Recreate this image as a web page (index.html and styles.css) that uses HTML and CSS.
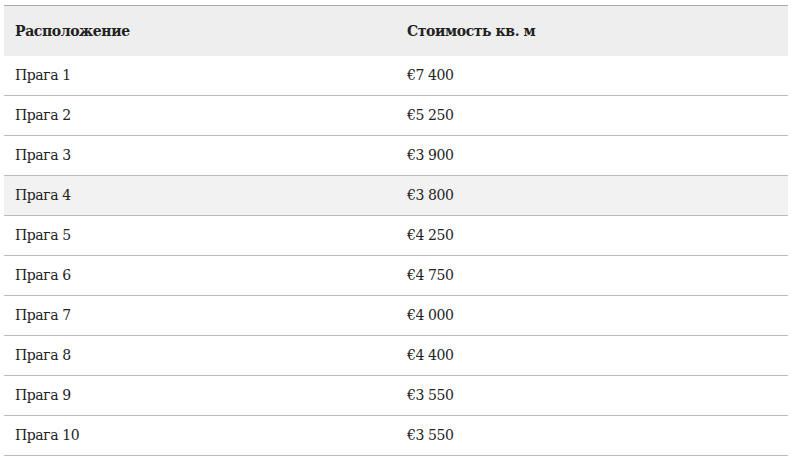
FILE: index.html
```html
<!DOCTYPE html>
<html lang="ru">
<head>
<meta charset="utf-8">
<link rel="stylesheet" href="styles.css">
</head>
<body>
<table class="prices">
  <thead>
    <tr><th>Расположение</th><th>Стоимость кв. м</th></tr>
  </thead>
  <tbody>
    <tr><td>Прага 1</td><td>€7 400</td></tr>
    <tr><td>Прага 2</td><td>€5 250</td></tr>
    <tr><td>Прага 3</td><td>€3 900</td></tr>
    <tr class="hl"><td>Прага 4</td><td>€3 800</td></tr>
    <tr><td>Прага 5</td><td>€4 250</td></tr>
    <tr><td>Прага 6</td><td>€4 750</td></tr>
    <tr><td>Прага 7</td><td>€4 000</td></tr>
    <tr><td>Прага 8</td><td>€4 400</td></tr>
    <tr><td>Прага 9</td><td>€3 550</td></tr>
    <tr><td>Прага 10</td><td>€3 550</td></tr>
  </tbody>
</table>
</body>
</html>
```
FILE: styles.css
```css
html, body { margin: 0; padding: 0; background: #fff; }
body { padding: 5px 13px 0 4px; }
.prices {
  width: 784px;
  border-collapse: collapse;
  font-family: "DejaVu Serif", serif;
  font-size: 14px;
  letter-spacing: -0.4px;
  line-height: 18px;
  color: #222;
  border-top: 1px solid #aaa;
}
.prices th, .prices td {
  width: 50%;
  text-align: left;
  padding: 0 11px;
}
.prices th {
  background: #eee;
  height: 49px;
  padding-bottom: 1px;
  font-weight: bold;
}
.prices td {
  height: 37px;
  padding-bottom: 2px;
  border-bottom: 1px solid #bbb;
}
.prices tr.hl td { background: #f2f2f2; }
```
